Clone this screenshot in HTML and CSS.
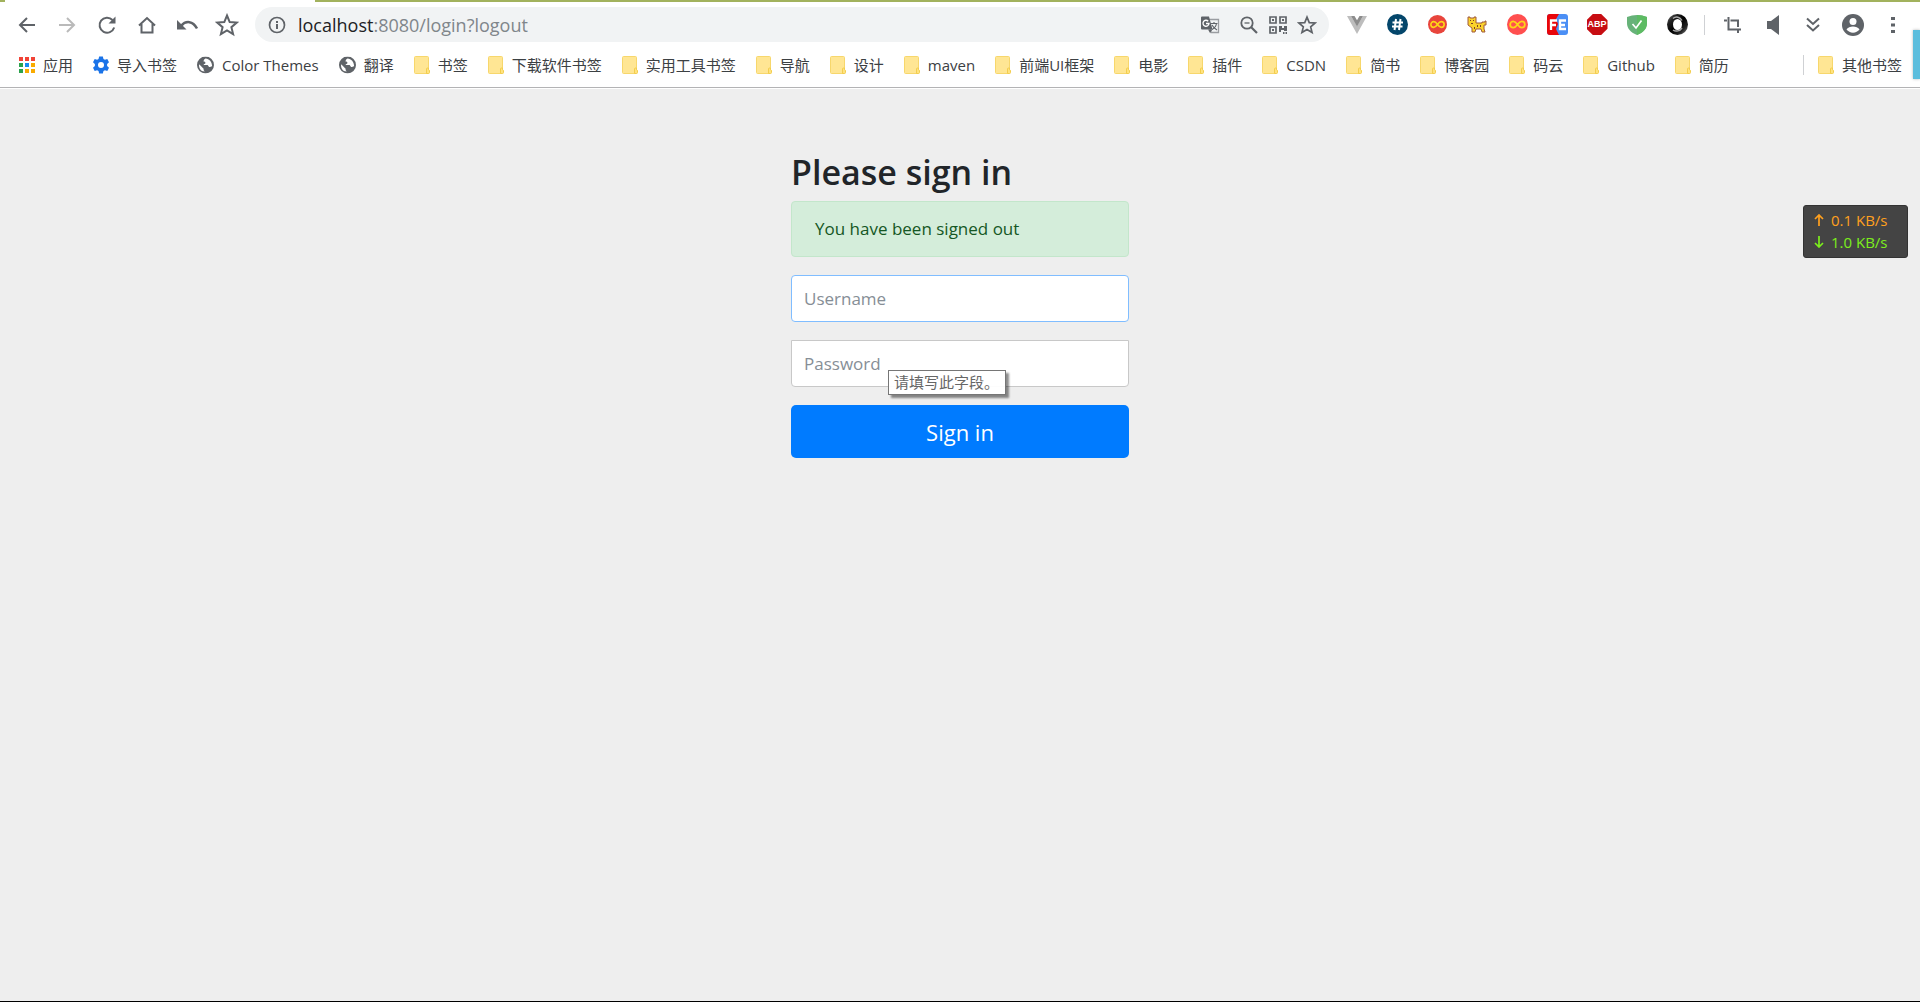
FILE: index.html
```html
<!DOCTYPE html>
<html lang="zh-CN">
<head>
  <meta charset="UTF-8">
  <meta name="viewport" content="width=device-width, initial-scale=1.0">
  <title>Please sign in</title>
  <link rel="stylesheet" href="styles.css">
</head>
<body>
  <!-- Shared icons -->
  <svg class="symbols" aria-hidden="true">
    <symbol id="folder" viewBox="0 0 16 18">
      <path d="M1.500 .5h12a1 1 0 0 1 1 1v15a1 1 0 0 1-1 1h-12a1 1 0 0 1-1-1v-15a1 1 0 0 1 1-1z" fill="#ffe694" stroke="#f7d76c"/>
      <path d="M12.500 17.500v-4.500q0-1 1-1h1v1.500q1 .5 1 1.500v1.500q0 1-1 1z" fill="#ffe37f" stroke="#f3cd4e"/>
    </symbol>
    <symbol id="globe" viewBox="0 0 18 18">
      <circle cx="9" cy="9" r="9" fill="#5f6368"/>
      <path d="M9 2c-1 1-2 1-2 3 0 1 2 0 2 2 0 1-2 1-2 2h4c1 0 1 2 2 2s2 0 3-1c0-4-3-8-7-8zM2.300 8.300 7 13v1c0 1 1 1 1 2-4 0-6.500-4-5.700-7.700z" fill="#fff"/>
    </symbol>
    <symbol id="star" viewBox="0 0 24 24">
      <path d="M12 2.500l2.700 6.600 7.100.5-5.400 4.600 1.700 6.900-6.100-3.700-6.100 3.700 1.700-6.900-5.400-4.600 7.100-.5z" fill="none" stroke="#5f6368" stroke-width="2"/>
    </symbol>
    <symbol id="infinity" viewBox="0 0 20 20">
      <circle cx="10" cy="10" r="10" fill="currentColor"/>
      <path d="M10 10c-1.500-2.200-2.500-3-4-3a3 3 0 0 0 0 6c1.500 0 2.500-.8 4-3s2.500-3 4-3a3 3 0 0 1 0 6c-1.500 0-2.500-.8-4-3z" fill="none" stroke="#fdd516" stroke-width="1.700"/>
    </symbol>
  </svg>

  <header class="browser">
    <div class="tab-strip"><span class="active-tab"></span></div>

    <!-- Toolbar -->
    <div class="toolbar">
      <button class="tool" aria-label="后退"><svg width="20" height="20" viewBox="0 0 20 20"><path d="M18 10H3M10 3l-7 7 7 7" fill="none" stroke="#5f6368" stroke-width="2"/></svg></button>
      <button class="tool" aria-label="前进"><svg width="20" height="20" viewBox="0 0 20 20"><path d="M2 10h15M10 3l7 7-7 7" fill="none" stroke="#bababa" stroke-width="2"/></svg></button>
      <button class="tool" aria-label="刷新"><svg width="20" height="20" viewBox="0 0 20 20"><path d="M17.200 12.500A7.500 7.500 0 1 1 15.500 5" fill="none" stroke="#5f6368" stroke-width="2"/><path d="M18.500 1.500v7h-7z" fill="#5f6368"/></svg></button>
      <button class="tool" aria-label="主页"><svg width="20" height="20" viewBox="0 0 20 20"><path d="M2 10.500l8-7.500 8 7.500M4.500 9v8.500h11V9" fill="none" stroke="#5f6368" stroke-width="2"/></svg></button>
      <button class="tool" aria-label="撤消"><svg width="22" height="20" viewBox="0 0 22 20"><path d="M5 11c5-6 12-5 16 2.500" fill="none" stroke="#5f6368" stroke-width="2.500"/><path d="M1 5v9.500h9.500z" fill="#5f6368"/></svg></button>
      <button class="tool" aria-label="收藏"><svg width="24" height="24"><use href="#star"/></svg></button>

      <div class="omnibox">
        <svg width="18" height="18" viewBox="0 0 18 18"><circle cx="9" cy="9" r="7.500" fill="none" stroke="#5f6368" stroke-width="1.700"/><path d="M9 8v5M9 5v2" stroke="#5f6368" stroke-width="2"/></svg>
        <span class="url">localhost<span class="url-path">:8080/login?logout</span></span>
        <button class="page-action translate" aria-label="翻译此页"><svg width="20" height="20" viewBox="0 0 20 20"><path d="M8 4.500h10.500v13H11z" fill="#f1f3f4" stroke="#9a9da1" stroke-width="1.300"/><path d="M10.500 8.500h7M14 7v1.500M16.500 8.500c-.5 3-2.500 5-4.500 6M12 10c1 2 2.500 3.500 5 5" fill="none" stroke="#5f6368" stroke-width="1.100"/><path d="M2 1.500h7l3.500 13H2a1 1 0 0 1-1-1v-11a1 1 0 0 1 1-1z" fill="#5f6368"/><path d="M8.200 6.200A3 3 0 1 0 9 8.500H6" fill="none" stroke="#fff" stroke-width="1.300"/><path d="M8 14.500h4.500L10 18z" fill="#5f6368"/></svg></button>
        <button class="page-action" aria-label="缩小"><svg width="18" height="18" viewBox="0 0 18 18"><circle cx="7" cy="7" r="5.700" fill="none" stroke="#5f6368" stroke-width="1.800"/><path d="M4.500 7h5" stroke="#5f6368" stroke-width="1.300"/><path d="M11.200 11.200l5.800 5.800" stroke="#5f6368" stroke-width="2.200"/></svg></button>
        <button class="page-action" aria-label="二维码"><svg width="18" height="18" viewBox="0 0 18 18"><path d="M1 1h6v6H1zM11 1h6v6h-6zM1 11h6v6H1z" fill="none" stroke="#5f6368" stroke-width="1.700"/><path d="M3 3h2v2H3zM13 3h2v2h-2zM3 13h2v2H3zM10 10h3v2h2v-2h3v5h-3v-1h-3v2h-2zM14 16h1.500v2H14zM16.500 16H18v2h-1.500z" fill="#5f6368"/></svg></button>
        <button class="page-action" aria-label="为此网页添加书签"><svg width="20" height="20"><use href="#star"/></svg></button>
      </div>

      <div class="extensions">
        <button class="tool" aria-label="Vue"><svg width="20" height="18" viewBox="0 0 20 18"><path d="M0 0h4l6 10 6-10h4L10 18z" fill="#bdbdbd"/><path d="M4 0h3.500L10 4.300 12.500 0H16l-6 10.500z" fill="#8c8c8c"/></svg></button>
        <button class="tool" aria-label="Hash"><svg width="21" height="21" viewBox="0 0 21 21"><circle cx="10.500" cy="10.500" r="10.500" fill="#04466b"/><path d="M9 5L7.500 16M13.500 5L12 16M5.500 8.500h10.500M5 12.500h10.500" stroke="#fff" stroke-width="2"/></svg></button>
        <button class="tool infinity-dark" aria-label="Infinity"><svg width="19" height="19" viewBox="0 0 20 20"><use href="#infinity"/></svg></button>
        <button class="tool" aria-label="Cat"><svg width="20" height="18" viewBox="0 0 20 18"><path d="M1 1h2v1h4V1h2v6h6V6h3V5h1v4h-2v4l1 3h-3l-1-3H9l-1 3H5v-4L1 9z" fill="#fbd22c" stroke="#a05b3c"/><path d="M3 4h1v1H3zM6 4h1v1H6zM4 7h2v1H4zM10 9h1v2h-1zM13 9h1v2h-1zM7 11h1v2H7z" fill="#7b4326"/></svg></button>
        <button class="tool infinity-light" aria-label="Infinity Pro"><svg width="21" height="21" viewBox="0 0 20 20"><use href="#infinity"/></svg></button>
        <button class="tool" aria-label="FE"><svg width="21" height="21" viewBox="0 0 21 21"><rect width="21" height="21" rx="3" fill="#4b8ff5"/><path d="M3 0h9l-3 5 2 5-2 5 3 6H3a3 3 0 0 1-3-3V3a3 3 0 0 1 3-3z" fill="#e8060b"/><path d="M4 16V6.500h6M4 11h5M19 6.500h-6V15h6M13 11h5" fill="none" stroke="#fff" stroke-width="2.300"/></svg></button>
        <button class="tool" aria-label="Adblock Plus"><span class="abp-sign">ABP</span></button>
        <button class="tool" aria-label="AdGuard"><svg width="20" height="20" viewBox="0 0 20 20"><path d="M0 2Q5 0 10 0t10 2v6c0 6-4 9.500-10 12C4 17.500 0 14 0 8z" fill="#67b279"/><path d="M10 0q5 0 10 2v6c0 6-4 9.500-10 12z" fill="#5dbb63"/><path d="M5.500 9l3.500 4 5.500-7.500" fill="none" stroke="#fff" stroke-width="1.700"/></svg></button>
        <button class="tool" aria-label="Ring"><svg width="21" height="21" viewBox="0 0 21 21"><defs><linearGradient id="ring" x2="1" y2="1"><stop stop-color="#888"/><stop offset=".25" stop-color="#222"/><stop offset=".5" stop-color="#000"/><stop offset=".75" stop-color="#222"/><stop offset="1" stop-color="#999"/></linearGradient></defs><circle cx="10.500" cy="10.500" r="10.500" fill="url(#ring)"/><ellipse cx="10.500" cy="10.500" rx="4.500" ry="5.500" fill="#fff"/><path d="M6 4.500C9 2 13 3 15 6.500M6 16c3 2 7 1 9-2" fill="none" stroke="#aaa" stroke-width="1.500"/></svg></button>
        <span class="divider"></span>
        <button class="tool" aria-label="截图"><svg width="18" height="18" viewBox="0 0 18 18"><path d="M0 4.500h3M6.500 4.500H14V11M4.500 1v12.500H17M14 13v4" fill="none" stroke="#5f6368" stroke-width="2"/></svg></button>
        <button class="tool" aria-label="声音"><svg width="14" height="20" viewBox="0 0 14 20"><path d="M1 6h4l8-6v20l-8-6H1z" fill="#5f6368"/></svg></button>
        <button class="tool" aria-label="更多扩展"><svg width="14" height="16" viewBox="0 0 14 16"><path d="M1 1.500l6 5.500 6-5.500M1 8l6 5.500L13 8" fill="none" stroke="#5f6368" stroke-width="2"/></svg></button>
        <button class="tool" aria-label="用户"><svg width="22" height="22" viewBox="0 0 22 22"><circle cx="11" cy="11" r="11" fill="#5f6368"/><circle cx="11" cy="7.500" r="3.500" fill="#fff"/><path d="M4.500 15.500c1-2 4-3 6.500-3s5.500 1 6.500 3c-1.500 2-4 3.200-6.500 3.200s-5-1.200-6.500-3.200z" fill="#fff"/></svg></button>
        <button class="tool" aria-label="菜单"><svg width="4" height="18" viewBox="0 0 4 18"><path d="M0 1h4v3H0zM0 7.500h4v3H0zM0 14h4v3H0z" fill="#5f6368"/></svg></button>
      </div>
    </div>

    <!-- Bookmarks bar -->
    <nav class="bookmarks">
      <a href="#"><svg width="16" height="18" viewBox="0 0 16 18"><path d="M0 1h4v4H0zM6 1h4v4H6zM12 1h4v4h-4z" fill="#f14336"/><path d="M0 7h4v4H0zM0 13h4v4H0z" fill="#2ba24c"/><path d="M6 7h4v4H6z" fill="#1a8cf0"/><path d="M6 13h4v4H6zM12 7h4v4h-4zM12 13h4v4h-4z" fill="#f9ab00"/></svg>应用</a>
      <a href="#"><svg width="16" height="18" viewBox="0 0 17 18"><path d="M6.500 0h4l.6 2.600 1.600.9 2.500-.8 1.800 3.300L15 8v2l2 2-1.800 3.300-2.500-.8-1.600.9-.6 2.600h-4l-.6-2.600-1.600-.9-2.500.8L0 12l2-2V8L0 6l1.800-3.300 2.500.8 1.600-.9z" fill="#1a73e8"/><circle cx="8.500" cy="9" r="3.200" fill="#fff"/></svg>导入书签</a>
      <a href="#"><svg width="17" height="18" viewBox="0 0 18 18"><use href="#globe"/></svg>Color Themes</a>
      <a href="#"><svg width="17" height="18" viewBox="0 0 18 18"><use href="#globe"/></svg>翻译</a>
      <a href="#"><svg width="16" height="18"><use href="#folder"/></svg>书签</a>
      <a href="#"><svg width="16" height="18"><use href="#folder"/></svg>下载软件书签</a>
      <a href="#"><svg width="16" height="18"><use href="#folder"/></svg>实用工具书签</a>
      <a href="#"><svg width="16" height="18"><use href="#folder"/></svg>导航</a>
      <a href="#"><svg width="16" height="18"><use href="#folder"/></svg>设计</a>
      <a href="#"><svg width="16" height="18"><use href="#folder"/></svg>maven</a>
      <a href="#"><svg width="16" height="18"><use href="#folder"/></svg>前端UI框架</a>
      <a href="#"><svg width="16" height="18"><use href="#folder"/></svg>电影</a>
      <a href="#"><svg width="16" height="18"><use href="#folder"/></svg>插件</a>
      <a href="#"><svg width="16" height="18"><use href="#folder"/></svg>CSDN</a>
      <a href="#"><svg width="16" height="18"><use href="#folder"/></svg>简书</a>
      <a href="#"><svg width="16" height="18"><use href="#folder"/></svg>博客园</a>
      <a href="#"><svg width="16" height="18"><use href="#folder"/></svg>码云</a>
      <a href="#"><svg width="16" height="18"><use href="#folder"/></svg>Github</a>
      <a href="#"><svg width="16" height="18"><use href="#folder"/></svg>简历</a>
      <a href="#" class="other"><svg width="16" height="18"><use href="#folder"/></svg>其他书签</a>
    </nav>
  </header>

  <!-- Login page -->
  <main class="page">
    <form class="form-signin" method="post" action="#">
      <h2>Please sign in</h2>
      <div class="alert" role="alert">You have been signed out</div>
      <div class="field">
        <input type="text" name="username" class="form-control active" placeholder="Username" aria-label="Username" required>
      </div>
      <div class="field">
        <input type="password" name="password" class="form-control password" placeholder="Password" aria-label="Password" required>
        <span class="tooltip" role="tooltip">请填写此字段。</span>
      </div>
      <button class="btn" type="submit">Sign in</button>
    </form>
  </main>

  <!-- Desktop widgets on top of the window -->
  <div class="side-handle"></div>
  <div class="net-speed">
    <div class="speed up"><svg width="10" height="12" viewBox="0 0 10 12"><path d="M5 12V1M1 5l4-4 4 4" fill="none" stroke="currentColor" stroke-width="1.700"/></svg>0.1 KB/s</div>
    <div class="speed down"><svg width="10" height="12" viewBox="0 0 10 12"><path d="M5 0v11M1 7l4 4 4-4" fill="none" stroke="currentColor" stroke-width="1.700"/></svg>1.0 KB/s</div>
  </div>
</body>
</html>
```

FILE: styles.css
```css
* {
  box-sizing: border-box;
}

body {
  margin: 0;
  min-height: 100vh;
  display: flex;
  flex-direction: column;
  overflow: hidden;
  background: #eee;
  color: #212529;
  font-family: "Open Sans", "Noto Sans CJK SC", sans-serif;
  font-size: 17px;
}

button,
input {
  font-family: inherit;
}

.symbols {
  position: absolute;
  width: 0;
  height: 0;
}

/* Browser window */
.browser {
  background: #fff;
  border-bottom: 1px solid #b3b3b5;
}

.tab-strip {
  height: 2px;
  padding-left: 5px;
  background: #a2b25d;
}

.active-tab {
  display: block;
  width: 310px;
  height: 2px;
  background: #fff;
}

.toolbar {
  display: flex;
  align-items: center;
  height: 45px;
  padding: 0 7px;
}

.tool {
  display: flex;
  align-items: center;
  justify-content: center;
  width: 40px;
  height: 36px;
  padding: 0;
  border: 0;
  background: none;
}

.omnibox {
  flex: 1;
  display: flex;
  align-items: center;
  height: 35px;
  margin: 0 8px;
  padding: 0 8px 0 13px;
  border-radius: 18px;
  background: #f1f3f4;
}

.url {
  flex: 1;
  padding-left: 12px;
  color: #202124;
  font-size: 18px;
  line-height: 24px;
}

.url-path {
  color: #80868b;
}

.page-action {
  display: flex;
  align-items: center;
  justify-content: center;
  width: 29px;
  height: 28px;
  padding: 0;
  border: 0;
  background: none;
}

.translate {
  margin-right: 10px;
}

.extensions {
  display: flex;
  align-items: center;
}

.infinity-dark {
  color: #e8453c;
}

.infinity-light {
  color: #ff4f4f;
}

.abp-sign {
  width: 21px;
  height: 21px;
  background: #c70d12;
  clip-path: polygon(30% 0, 70% 0, 100% 30%, 100% 70%, 70% 100%, 30% 100%, 0 70%, 0 30%);
  color: #fff;
  font-family: "Liberation Sans", sans-serif;
  font-size: 9px;
  font-weight: bold;
  line-height: 21px;
}

.divider {
  width: 1px;
  height: 20px;
  margin: 0 8px 0 7px;
  background: #cfd1d4;
}

/* Bookmarks bar */
.bookmarks {
  display: flex;
  align-items: center;
  gap: 20px;
  height: 40px;
  padding: 0 18px 4px 19px;
  font-size: 15px;
  white-space: nowrap;
}

.bookmarks a {
  display: flex;
  align-items: center;
  gap: 8px;
  color: #3c4043;
  line-height: 20px;
  text-decoration: none;
}

.bookmarks .other {
  margin-left: auto;
  padding-left: 14px;
  border-left: 1px solid #cfd1d4;
}

/* Login form */
.page {
  flex: 1;
  padding-top: 46px;
  border-top: 1px solid #fff;
  border-bottom: 1px solid #000;
}

.form-signin {
  max-width: 372px;
  margin: 0 auto;
  padding: 16px 17px;
}

.form-signin h2 {
  margin: 0 0 7px;
  font-size: 34px;
  font-weight: 600;
  line-height: 43px;
}

.alert {
  margin-bottom: 18px;
  padding: 14px 23px;
  border: 1px solid #c3e6cb;
  border-radius: 4px;
  background: #d4edda;
  color: #155724;
  line-height: 26px;
}

.field {
  position: relative;
  margin-bottom: 18px;
}

.form-control {
  display: block;
  width: 100%;
  height: 47px;
  padding: 0 12px;
  border: 1px solid #ced4da;
  border-radius: 4px;
  background: #fff;
  font-size: 17px;
}

.form-control::placeholder {
  color: #868e96;
}

.form-control.active {
  border-color: #80bdff;
}

.form-control.password {
  border-color: #c8c8c8;
  border-radius: 0 0 4px 4px;
}

.btn {
  display: block;
  width: 100%;
  height: 53px;
  border: 0;
  border-radius: 5px;
  background: #007bff;
  color: #fff;
  font-size: 22px;
}

.tooltip {
  position: absolute;
  top: 30px;
  left: 97px;
  width: 118px;
  padding: 0 5px;
  border: 1px solid #767676;
  background: rgba(255, 255, 255, 0.95);
  box-shadow: 3px 3px 2px rgba(0, 0, 0, 0.45);
  color: #666;
  font-size: 15px;
  line-height: 23px;
  white-space: nowrap;
}

/* Desktop widgets */
.side-handle {
  position: absolute;
  top: 30px;
  right: 0;
  width: 7px;
  height: 49px;
  background: #5bbddd;
  box-shadow: 0 0 3px rgba(0, 0, 0, 0.3);
}

.net-speed {
  position: absolute;
  top: 205px;
  right: 12px;
  width: 105px;
  padding: 3px 10px 4px;
  border: 1px solid #333;
  border-radius: 3px;
  background: #444;
  font-size: 15px;
}

.speed {
  display: flex;
  align-items: center;
  gap: 7px;
  line-height: 22px;
  white-space: nowrap;
}

.up {
  color: #ffa01e;
}

.down {
  color: #7cee1c;
}
```
